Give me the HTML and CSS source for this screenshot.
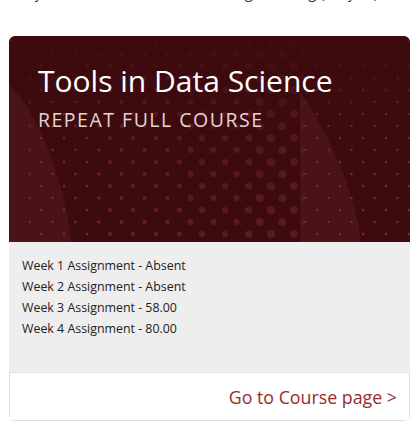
FILE: index.html
```html
<!DOCTYPE html>
<html lang="en">
<head>
<meta charset="utf-8">
<link rel="stylesheet" href="styles.css">
</head>
<body>
<div class="prev-line"><span class="prev-left">Subject</span><span class="prev-right">Programming (Project)</span></div>
<div class="wrap">
  <div class="card">
    <div class="hero">
      <svg class="hero-bg" width="401" height="206" viewBox="0 0 401 206" aria-hidden="true">
        <defs>
          <pattern id="d1" width="23" height="24" patternUnits="userSpaceOnUse" x="5" y="2">
            <circle cx="4" cy="4" r="1.2" fill="#8a2a2e"/><circle cx="15.5" cy="16" r="1.2" fill="#8a2a2e"/>
          </pattern>
          <pattern id="d2" width="23" height="24" patternUnits="userSpaceOnUse" x="5" y="2">
            <circle cx="4" cy="4" r="2" fill="#6e1f23"/><circle cx="15.5" cy="16" r="2" fill="#6e1f23"/>
          </pattern>
          <pattern id="d3" width="23" height="24" patternUnits="userSpaceOnUse" x="5" y="2">
            <circle cx="4" cy="4" r="3" fill="#5e1a1e"/><circle cx="15.5" cy="16" r="3" fill="#5e1a1e"/>
          </pattern>
          <pattern id="d4" width="23" height="24" patternUnits="userSpaceOnUse" x="5" y="2">
            <circle cx="4" cy="4" r="4" fill="#5a1b1e"/><circle cx="15.5" cy="16" r="4" fill="#5a1b1e"/>
          </pattern>
          <linearGradient id="fade" x1="0" y1="0" x2="0" y2="1">
            <stop offset="0" stop-color="#fff" stop-opacity="0.1"/>
            <stop offset="0.45" stop-color="#fff" stop-opacity="0.75"/>
            <stop offset="1" stop-color="#fff" stop-opacity="1"/>
          </linearGradient>
          <mask id="m"><rect width="401" height="206" fill="url(#fade)"/></mask>
        </defs>
        <rect width="401" height="206" fill="#3d0b0e"/>
        <path d="M0 48 C30 80 55 140 62 206 L0 206 Z" fill="#4a1316"/>
        <path d="M291 55 C320 100 345 150 352 206 L291 206 Z" fill="#4a1316"/>
        <g mask="url(#m)">
          <rect x="20" y="0" width="70" height="206" fill="url(#d1)"/>
          <rect x="90" y="0" width="80" height="206" fill="url(#d2)"/>
          <rect x="170" y="0" width="70" height="206" fill="url(#d3)"/>
          <rect x="240" y="0" width="55" height="206" fill="url(#d4)"/>
          <rect x="295" y="0" width="106" height="206" fill="url(#d1)"/>
        </g>
      </svg>
      <h1 class="title">Tools in Data Science</h1>
      <p class="subtitle">REPEAT FULL COURSE</p>
    </div>
    <div class="scores">
      <p>Week 1 Assignment - Absent</p>
      <p>Week 2 Assignment - Absent</p>
      <p>Week 3 Assignment - 58.00</p>
      <p>Week 4 Assignment - 80.00</p>
    </div>
    <div class="foot">
      <a class="go" href="#">Go to Course page &gt;</a>
    </div>
  </div>
</div>
</body>
</html>
```
FILE: styles.css
```css
html, body {
  margin: 0;
  padding: 0;
  background: #fff;
  font-family: "Open Sans", "Noto Sans", sans-serif;
  overflow: hidden;
}
.prev-line {
  display: flex;
  justify-content: space-between;
  height: 5px;
  overflow: hidden;
  padding: 0 42px 0 9px;
}
.prev-left, .prev-right {
  font-size: 15px;
  line-height: 20px;
  color: #1d3b5e;
  margin-top: -18px;
  display: block;
}
.wrap {
  padding: 31px 10px 0 9px;
}
.card {
  border-radius: 6px;
  overflow: hidden;
}
.hero {
  position: relative;
  height: 206px;
  box-sizing: border-box;
  padding: 26px 29px 0;
  color: #fff;
}
.hero-bg {
  position: absolute;
  left: 0;
  top: 0;
  display: block;
}
.title {
  position: relative;
  margin: 0;
  font-weight: 400;
  font-size: 30px;
  line-height: 38px;
  color: #fff;
}
.subtitle {
  position: relative;
  margin: 7px 0 0;
  font-size: 19.5px;
  letter-spacing: 1.5px;
  line-height: 26px;
  color: #e3d5d5;
}
.scores {
  background: #eeeeee;
  padding: 13px 13px 0;
  height: 130px;
  box-sizing: border-box;
}
.scores p {
  margin: 0;
  font-size: 12.4px;
  line-height: 21px;
  color: #222;
}
.foot {
  background: #fff;
  border: 1px solid #dcdcdc;
  border-top-color: #e4e4e4;
  border-radius: 0 0 4px 4px;
  height: 49px;
  box-sizing: border-box;
  display: flex;
  align-items: center;
  justify-content: flex-end;
  padding-right: 12px;
}
.go {
  color: #9a2b2b;
  text-decoration: none;
  font-size: 17.8px;
}
```
